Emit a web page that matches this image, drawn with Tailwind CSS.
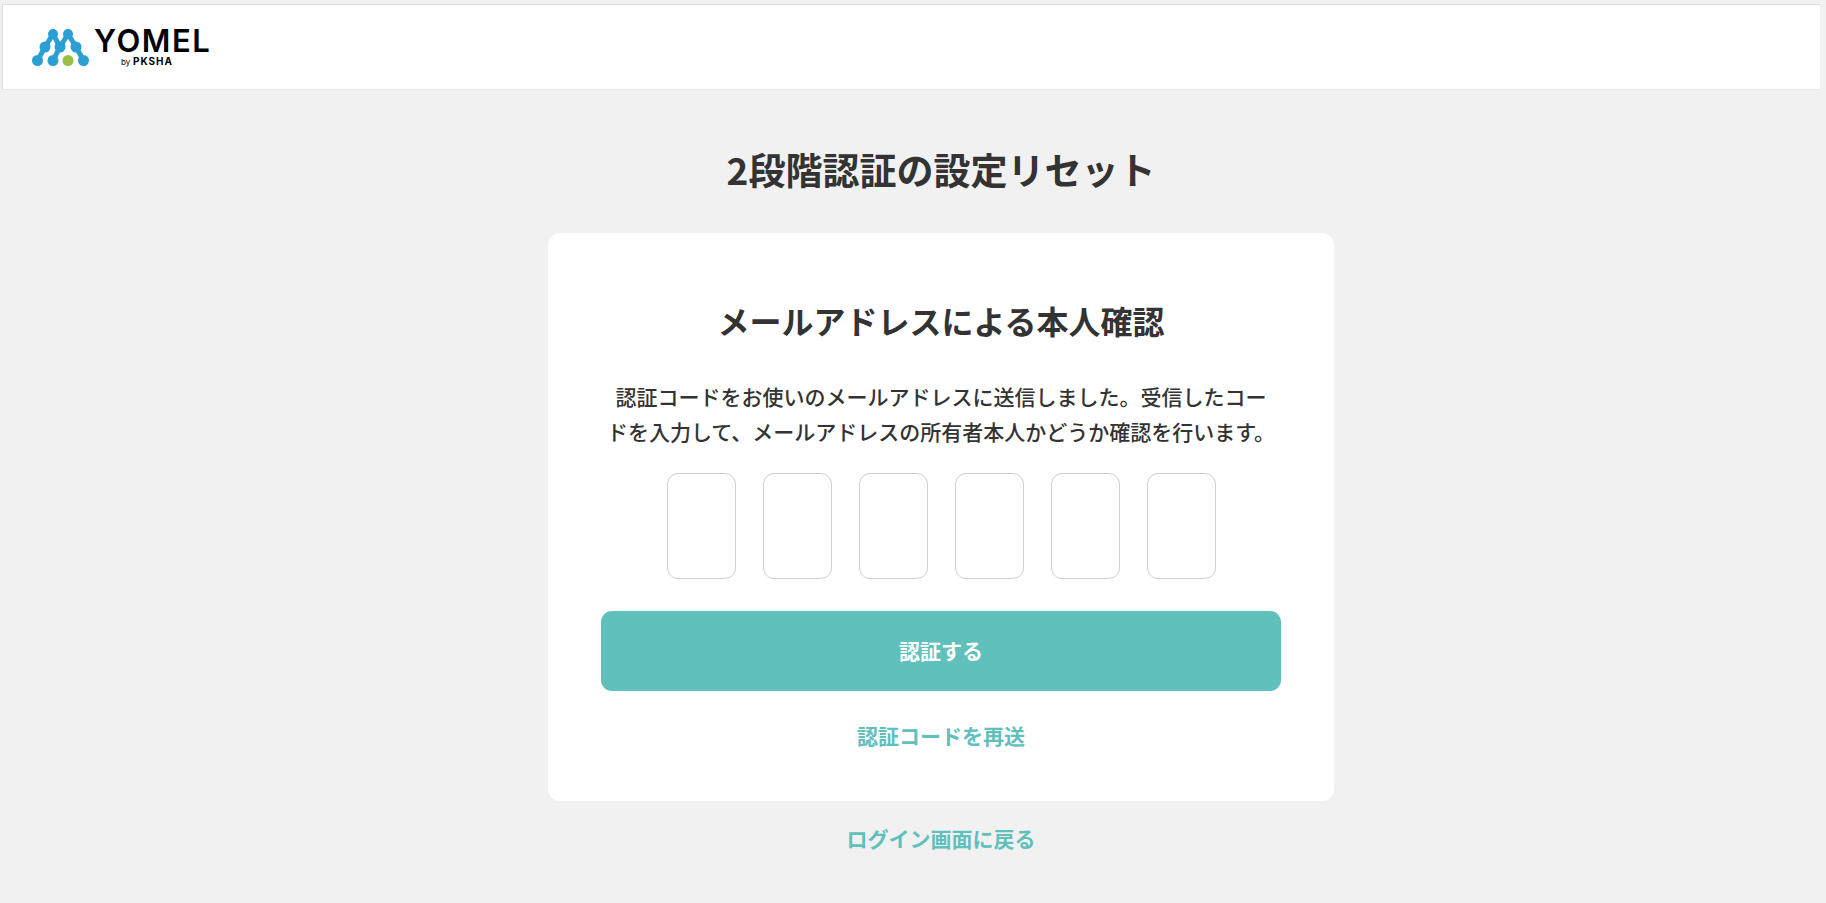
<!DOCTYPE html>
<html lang="ja">
<head>
    <meta charset="UTF-8">
    <meta name="viewport" content="width=device-width, initial-scale=1.0">
    <title>2段階認証の設定リセット | YOMEL</title>
    <script src="https://cdn.jsdelivr.net/npm/@tailwindcss/browser@4"></script>
</head>
<body class="min-h-screen bg-[#f1f1f1] pt-1 pl-0.5 pr-1.5 pb-8 font-['Noto_Sans_CJK_JP',sans-serif] text-[#333333]">
    <header class="flex h-[86px] items-center border border-r-0 border-b-[#e8e8e8] border-[#dddddd] bg-white px-7">
        <a href="#" aria-label="YOMEL by PKSHA" class="text-black">
            <svg class="h-[60px] w-[190px]" viewBox="31 17 190 60">
                <!-- Molecule mark -->
                <path d="M53 34L45 47L37.500 60.500M53 34L60 47L53 60.500M68 34L60 47M68 34L76 47L83.500 60.500" fill="none" stroke="#2a9fd4" stroke-width="5"/>
                <g fill="#2a9fd4">
                    <circle cx="53" cy="34" r="5"/>
                    <circle cx="68" cy="34" r="5"/>
                    <circle cx="45" cy="47" r="5.500"/>
                    <circle cx="60" cy="47" r="5.500"/>
                    <circle cx="76" cy="47" r="5.500"/>
                    <circle cx="37.500" cy="60.500" r="5.500"/>
                    <circle cx="53" cy="60.500" r="5.500"/>
                    <circle cx="83.500" cy="60.500" r="5.500"/>
                </g>
                <circle cx="68" cy="60.500" r="5.500" fill="#97bf42"/>
                <g fill="currentColor" class="font-[Inter,sans-serif]">
                    <text x="94" y="52" class="text-[31px] font-semibold tracking-wider">YOMEL</text>
                    <text x="121" y="65" class="text-[8px]">by</text>
                    <text x="133" y="65" class="text-[10px] font-bold tracking-widest">PKSHA</text>
                </g>
            </svg>
        </a>
    </header>

    <main class="flex flex-col items-center pt-[54px] pl-[60px]">
        <h1 class="text-[37px] leading-[50px] font-bold">2段階認証の設定リセット</h1>

        <!-- Verification card -->
        <section class="mt-[39px] flex w-full max-w-[786px] flex-col items-center rounded-xl bg-white px-[53px] pt-16 pb-12">
            <h2 class="text-[32px] leading-[46px] font-bold">メールアドレスによる本人確認</h2>
            <p class="mt-9 text-center text-[21px] leading-[35px] font-medium">認証コードをお使いのメールアドレスに送信しました。受信したコー<br>ドを入力して、メールアドレスの所有者本人かどうか確認を行います。</p>

            <form class="mt-6 flex w-full flex-col items-center" onsubmit="return false">
                <div id="codeInputs" class="flex gap-[27px]">
                    <input type="text" inputmode="numeric" maxlength="1" aria-label="認証コード 1桁目" class="h-[106px] w-[69px] rounded-[11px] border border-[#d0d0d0] text-center text-[32px] outline-none focus:border-[#5fc0bc]">
                    <input type="text" inputmode="numeric" maxlength="1" aria-label="認証コード 2桁目" class="h-[106px] w-[69px] rounded-[11px] border border-[#d0d0d0] text-center text-[32px] outline-none focus:border-[#5fc0bc]">
                    <input type="text" inputmode="numeric" maxlength="1" aria-label="認証コード 3桁目" class="h-[106px] w-[69px] rounded-[11px] border border-[#d0d0d0] text-center text-[32px] outline-none focus:border-[#5fc0bc]">
                    <input type="text" inputmode="numeric" maxlength="1" aria-label="認証コード 4桁目" class="h-[106px] w-[69px] rounded-[11px] border border-[#d0d0d0] text-center text-[32px] outline-none focus:border-[#5fc0bc]">
                    <input type="text" inputmode="numeric" maxlength="1" aria-label="認証コード 5桁目" class="h-[106px] w-[69px] rounded-[11px] border border-[#d0d0d0] text-center text-[32px] outline-none focus:border-[#5fc0bc]">
                    <input type="text" inputmode="numeric" maxlength="1" aria-label="認証コード 6桁目" class="h-[106px] w-[69px] rounded-[11px] border border-[#d0d0d0] text-center text-[32px] outline-none focus:border-[#5fc0bc]">
                </div>
                <button type="submit" class="mt-8 h-20 w-full rounded-[11px] bg-[#5fc0bc] text-[21px] font-bold text-white hover:bg-[#52b0ac]">認証する</button>
                <button type="button" class="mt-[27px] text-[21px] leading-[35px] font-bold text-[#5fc0bc] hover:underline">認証コードを再送</button>
            </form>
        </section>

        <a href="#" class="mt-5 text-[21px] leading-[35px] font-bold text-[#5fc0bc] hover:underline">ログイン画面に戻る</a>
    </main>

    <script>
        const codeInputs = document.querySelectorAll('#codeInputs input');
        codeInputs.forEach((input, i) => {
            input.addEventListener('input', () => {
                if (input.value && codeInputs[i + 1]) codeInputs[i + 1].focus();
            });
        });
    </script>
</body>
</html>
